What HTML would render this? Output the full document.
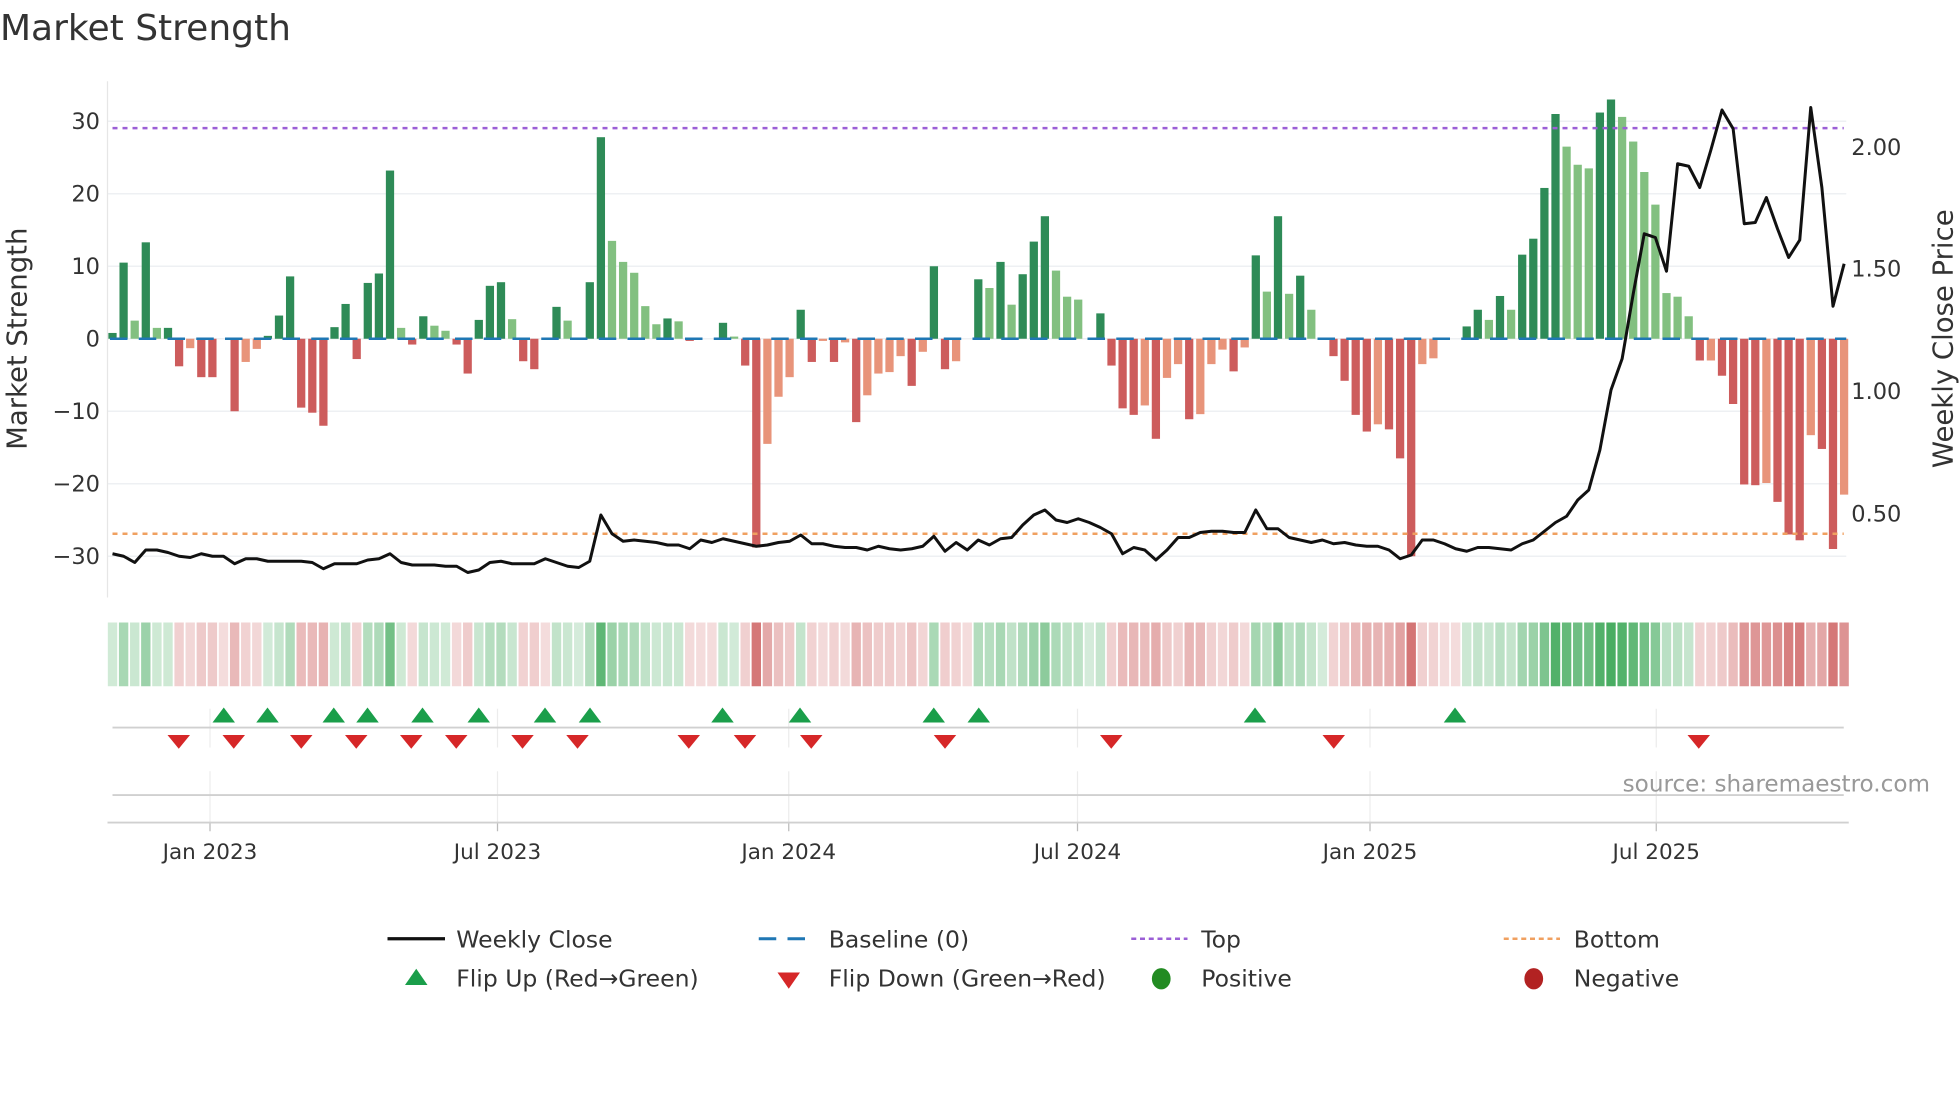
<!DOCTYPE html>
<html><head><meta charset="utf-8"><style>
html,body{margin:0;padding:0;background:#fff;width:1960px;height:1102px;overflow:hidden}
svg{display:block}
text{font-family:"DejaVu Sans","Liberation Sans",sans-serif;fill:#333}
</style></head><body>
<svg id="s" width="1960" height="1102" viewBox="0 0 1568 881.6" xmlns="http://www.w3.org/2000/svg">
<text x="0" y="32" font-size="28.8">Market Strength</text>
<g id="grid"></g>
<line x1="86" y1="65" x2="86" y2="478" stroke="#e6e6e6" stroke-width="1"/>
<g id="bars"></g>
<line x1="88" y1="271" x2="1477" y2="271" stroke="#1f77b4" stroke-width="2" stroke-dasharray="14,9"/>
<line x1="90" y1="102.5" x2="1475" y2="102.5" stroke="#9b5fd6" stroke-width="2" stroke-dasharray="4,4"/>
<line x1="90" y1="427" x2="1475" y2="427" stroke="#f0a060" stroke-width="2" stroke-dasharray="4,4"/>
<polyline id="price" fill="none" stroke="#111" stroke-width="2.4" stroke-linejoin="round"/>
<g font-size="18" text-anchor="end">
<text x="80" y="103">30</text><text x="80" y="161">20</text><text x="80" y="219">10</text><text x="80" y="277">0</text>
<text x="80" y="335">−10</text><text x="80" y="393">−20</text><text x="80" y="451">−30</text>
</g>
<g font-size="18">
<text x="1481" y="124">2.00</text><text x="1481" y="221">1.50</text><text x="1481" y="319">1.00</text><text x="1481" y="417">0.50</text>
</g>
<text transform="translate(21,271) rotate(-90)" font-size="22" text-anchor="middle">Market Strength</text>
<text transform="translate(1562,271) rotate(-90)" font-size="22" text-anchor="middle">Weekly Close Price</text>
<g id="heat"></g>
<g id="vgrid"></g>
<line x1="90" y1="582" x2="1475" y2="582" stroke="#d0d0d0" stroke-width="1.5"/>
<line x1="90" y1="636" x2="1475" y2="636" stroke="#d0d0d0" stroke-width="1.5"/>
<line x1="86" y1="658" x2="1479" y2="658" stroke="#d0d0d0" stroke-width="1.5"/>
<g id="marks"></g>
<text x="1544" y="633" font-size="18.5" text-anchor="end" style="fill:#999">source: sharemaestro.com</text>
<g id="xl" font-size="17.2" text-anchor="middle"></g>
<g font-size="18.8">
<line x1="310" y1="751" x2="356" y2="751" stroke="#111" stroke-width="2.6"/><text x="365" y="758">Weekly Close</text>
<line x1="607" y1="751" x2="652" y2="751" stroke="#1f77b4" stroke-width="2.4" stroke-dasharray="14,9"/><text x="663" y="758">Baseline (0)</text>
<line x1="905" y1="751" x2="950" y2="751" stroke="#9b5fd6" stroke-width="2" stroke-dasharray="4,3"/><text x="961" y="758">Top</text>
<line x1="1203" y1="751" x2="1248" y2="751" stroke="#f0a060" stroke-width="2" stroke-dasharray="4,3"/><text x="1259" y="758">Bottom</text>
<polygon points="333,775 324,788 342,788" fill="#1a9e4a"/><text x="365" y="789">Flip Up (Red→Green)</text>
<polygon points="622,778 640,778 631,791" fill="#d62728"/><text x="663" y="789">Flip Down (Green→Red)</text>
<ellipse cx="929" cy="783" rx="7.5" ry="8.5" fill="#228b22"/><text x="961" y="789">Positive</text>
<ellipse cx="1227" cy="783" rx="7.5" ry="8.5" fill="#b22222"/><text x="1259" y="789">Negative</text>
</g>
</svg>
<script>
var NS="http://www.w3.org/2000/svg";
function el(p,t,a){var e=document.createElementNS(NS,t);for(var k in a)e.setAttribute(k,a[k]);document.getElementById(p).appendChild(e);return e;}
var V=[0.8,10.5,2.5,13.3,1.5,1.5,-3.8,-1.3,-5.3,-5.3,0,-10,-3.2,-1.4,0.4,3.2,8.6,-9.5,-10.2,-12,1.6,4.8,-2.8,7.7,9,23.2,1.5,-0.8,3.1,1.8,1.1,-0.8,-4.8,2.6,7.3,7.8,2.7,-3.1,-4.2,0,4.4,2.5,0,7.8,27.8,13.5,10.6,9.1,4.5,2,2.8,2.4,-0.3,0,0,2.2,0.3,-3.7,-28.8,-14.5,-8,-5.3,4,-3.2,-0.3,-3.2,-0.5,-11.5,-7.8,-4.8,-4.6,-2.4,-6.5,-1.8,10,-4.2,-3.1,0,8.2,7,10.6,4.7,8.9,13.4,16.9,9.4,5.8,5.4,0,3.5,-3.7,-9.6,-10.5,-9.2,-13.8,-5.4,-3.5,-11.1,-10.4,-3.5,-1.5,-4.5,-1.2,11.5,6.5,16.9,6.2,8.7,4,0,-2.4,-5.8,-10.5,-12.8,-11.8,-12.5,-16.5,-30,-3.5,-2.7,0,0,1.7,4,2.6,5.9,4,11.6,13.8,20.8,31,26.5,24,23.5,31.2,33,30.6,27.2,23,18.5,6.3,5.8,3.1,-3,-3,-5.1,-9,-20.1,-20.2,-19.9,-22.5,-27,-27.8,-13.3,-15.2,-29,-21.5];
var T="DDLDLDRORR"+"ZROODDDRRR"+"DDRDDDLRDL"+"LRRDDDLRRZ"+"DLZDDLLLLL"+"DLRZZDLRRO"+"OODROROROO"+"OORODROZDL"+"DLDDDLLLZD"+"RRROROOROO"+"ORODLDLDLZ"+"RRRRORRROO"+"ZZDDLDLDDD"+"DLLLDDLLLL"+"LLLRORRRRO"+"RRRORRO";
var P=[443,445,450,440,440,442,445,446,443,445,445,451,447,447,449,449,449,449,450,455,451,451,451,448,447,443,450,452,452,452,453,453,458,456,450,449,451,451,451,447,450,453,454,449,412,427,433,432,433,434,436,436,439,432,434,431,433,435,437,436,434,433,428,435,435,437,438,438,440,437,439,440,439,437,429,441,434,440,432,436,431,430,420,412,408,416,418,415,418,422,427,443,438,440,448,440,430,430,426,425,425,426,426,408,423,423,430,432,434,432,435,434,436,437,437,440,447,444,432,432,435,439,441,438,438,439,440,435,432,425,418,413,400,392,360,312,287,235,187,190,217,131,133,150,120,88,103,179,178,158,183,206,192,86,150,245,211];
[97,155,213,271,329,387,445].forEach(function(y){el("grid","line",{x1:86,x2:1477,y1:y,y2:y,stroke:"#eef0f3","stroke-width":1.2});});
var pts=[];
for(var i=0;i<V.length;i++){
 var x=90+8.88*i,v=V[i],t=T[i]||"Z";
 if(v!==0){
  var light=(t==="L"||t==="O");
  var col=v>0?(light?"#82c080":"#2e8b57"):(light?"#e8947a":"#cd5c5c");
  var y0=271,y1=271-v*5.8;el("bars","rect",{x:x-3.3,y:Math.min(y0,y1),width:6.6,height:Math.abs(y1-y0),fill:col});}
 pts.push(x.toFixed(1)+","+P[i]);
 var a=Math.min(Math.abs(v)/33,1),hc;
 if(v>0||(v===0&&i>0&&V[i-1]>0)){hc="rgba(58,166,85,"+(0.22+0.7*a).toFixed(2)+")";}
 else hc="rgba(200,80,80,"+(0.2+0.65*a).toFixed(2)+")";
 el("heat","rect",{x:x-4.44+0.7,y:498,width:7.5,height:51,fill:hc});
}
document.getElementById("price").setAttribute("points",pts.join(" "));
var ticks=[[168,"Jan 2023"],[398,"Jul 2023"],[631,"Jan 2024"],[862,"Jul 2024"],[1096,"Jan 2025"],[1325,"Jul 2025"]];
ticks.forEach(function(t){
 el("vgrid","line",{x1:t[0],x2:t[0],y1:567,y2:598,stroke:"#ececec","stroke-width":1});
 el("vgrid","line",{x1:t[0],x2:t[0],y1:617,y2:658,stroke:"#ececec","stroke-width":1});
 el("vgrid","line",{x1:t[0],x2:t[0],y1:658,y2:665,stroke:"#bbb","stroke-width":1});
 var e=el("xl","text",{x:t[0],y:687});e.textContent=t[1];
});
[179,214,267,294,338,383,436,472,578,640,747,783,1004,1164].forEach(function(x){el("marks","polygon",{points:x+",566 "+(x-9)+",578 "+(x+9)+",578",fill:"#1a9e4a"});});
[143,187,241,285,329,365,418,462,551,596,649,756,889,1067,1359].forEach(function(x){el("marks","polygon",{points:(x-9)+",588 "+(x+9)+",588 "+x+",599",fill:"#d62728"});});
</script>
</body></html>
